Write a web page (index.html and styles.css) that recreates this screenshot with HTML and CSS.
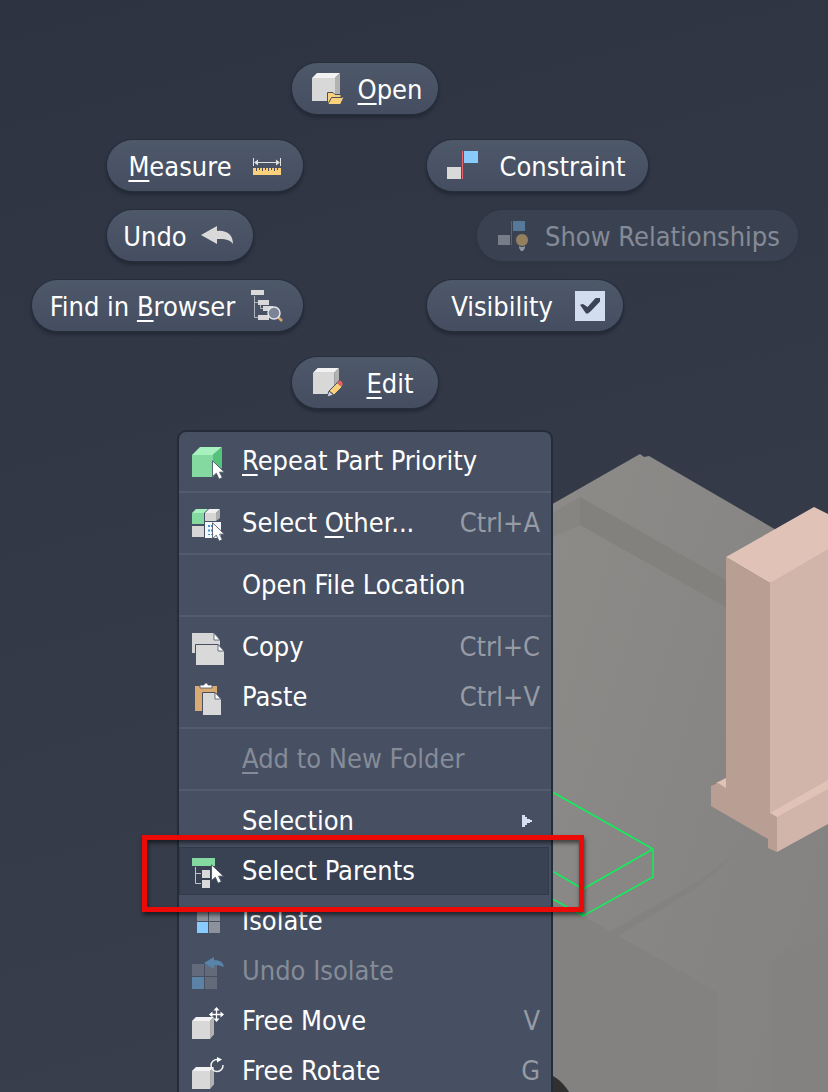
FILE: index.html
```html
<!DOCTYPE html>
<html lang="en">
<head>
<meta charset="utf-8">
<meta name="viewport" content="width=device-width, initial-scale=1">
<title>Marking menu</title>
<link rel="stylesheet" href="styles.css">
</head>
<body>
<svg class="scene" viewBox="0 0 828 1092" preserveAspectRatio="xMinYMin slice" aria-hidden="true">
  <defs>
    <linearGradient id="body" x1="0" y1="0" x2="1" y2="0.6">
      <stop offset="0" stop-color="#8d8c89"/>
      <stop offset="1" stop-color="#848382"/>
    </linearGradient>
  </defs>
  <path fill="url(#body)" d="M500 534 640 454 644 457 649 456 828 560V1092H500z"/>
  <path fill="#868582" d="M540 520 580 497V525L540 543z"/>
  <path fill="#82817e" d="M580 497 740 588V615L580 525z"/>
  <path fill="#838280" d="M540 892 583 916 717 992V1092H540z"/>
  <path fill="#838280" d="M610 932 700 880 740 850 700 886 618 936z"/>
  <path fill="#828180" d="M771 959 828 931V1092H771z" opacity=".35"/>
  <path fill="#e0c2b7" d="M726 557 814 507 828 514V560L770 583z"/>
  <path fill="#d2b5aa" d="M770 583 828 549V790L770 815z"/>
  <path fill="#e0c2b7" d="M716 783 726 778V790zM770 813 828 780V790L777 818z"/>
  <path fill="#b99e93" d="M726 557 770 583V813L777 817V852L768 848V839L711 806V786L718 783 726 788z"/>
  <path fill="#d2b5aa" d="M777 817 828 789V824L777 852z"/>
  <path fill="#303030" d="M540 1072Q558 1074 569 1092H540z"/>
  <path fill="none" stroke="#10f05a" stroke-width="1.5" d="M540 785 653 849V877L583 916 540 892M653 849 583 889V916M583 889 540 864"/>
</svg>

<svg class="symbols" aria-hidden="true">
  <symbol id="cursor" viewBox="0 0 12 18"><path fill="#fff" stroke="#474f62" stroke-width=".8" d="M.5.5V15L4 12 6.500 17.500 9.500 16 7 11H11.500z"/></symbol>
  <symbol id="cube" viewBox="0 0 28 28"><path fill="#d8d8d8" d="M0 5H23V28H0z"/><path fill="#f2f2f2" d="M0 5 5 0H28L23 5z"/><path fill="#b2b2b2" d="M23 5 28 0V22L23 28z"/></symbol>
</svg>

<main class="marking">
  <button class="pill w-s top" type="button">
    <svg class="icon" viewBox="0 0 32 32"><use href="#cube" width="28" height="28"/><path fill="#fbd07a" stroke="#474f62" d="M15.500 31.500V19.500H21L23 21.500H29V24H32L28.500 31.500z"/><path fill="none" stroke="#474f62" d="M16 31 19.500 24.500H30"/></svg>
    <span class="label"><u>O</u>pen</span>
  </button>

  <div class="side left">
    <button class="pill w-m inset" type="button">
      <span class="label"><u>M</u>easure</span>
      <svg class="icon" viewBox="0 0 32 32"><path fill="#fbd07a" d="M2 18H30V25H2z"/><path stroke="#474f62" d="M5.500 18V21M8.500 18V20M11.500 18V21M14.500 18V20M17.500 18V21M20.500 18V20M23.500 18V21M26.500 18V20"/><path stroke="#e0e0e0" d="M2.500 8V16M29.500 8V16M5 12.500H27"/><path fill="#e0e0e0" d="M3 12.500 7 9.500V15.500zM29 12.500 25 9.500V15.500z"/></svg>
    </button>
    <button class="pill w-s inset" type="button">
      <span class="label">Undo</span>
      <svg class="icon" viewBox="0 0 32 32"><path fill="#d9d9d9" d="M0 15 16 6V11C26 10 32 15 32 24 28 19 24 19 16 19V24z"/></svg>
    </button>
    <button class="pill w-l" type="button">
      <span class="label">Find in <u>B</u>rowser</span>
      <svg class="icon" viewBox="0 0 32 32"><path fill="#d9d9d9" d="M0 0H13V5H0zM7 10H18V15H7zM12 16H22V21H12zM7 25H18V30H7z"/><path fill="none" stroke="#aeb3bd" d="M3.500 6V27.500H7M3.500 12.500H7M9.500 15V18.500H12"/><path stroke="#dba46a" stroke-width="2.500" d="M27 27 31 31"/><circle cx="23" cy="23" r="6" fill="#7b8496" stroke="#e4e6ea" stroke-width="1.500"/></svg>
    </button>
  </div>

  <div class="side right">
    <button class="pill w-ml" type="button">
      <svg class="icon" viewBox="0 0 32 32"><path fill="#d9d9d9" d="M0 17H14V29H0z"/><path fill="#8acbfd" d="M17 1H31V13H17z"/><path stroke="#f0616a" d="M15.500 1V29"/></svg>
      <span class="label">Constraint</span>
    </button>
    <button class="pill w-xl shift" type="button" disabled>
      <svg class="icon" viewBox="0 0 32 32"><path fill="#777d88" d="M1 15H13V25H1z"/><path fill="#56799a" d="M16 1H28V11H16z"/><path stroke="#84525f" d="M14.500 1V25"/><path fill="#9094a0" d="M22 25H28V28L26 31H24L22 28z"/><circle cx="25" cy="20" r="6.500" fill="#92805f" stroke="#3a4252"/></svg>
      <span class="label">Show Relationships</span>
    </button>
    <label class="pill w-m" for="visibility">
      <span class="label">Visibility</span>
      <input class="check" type="checkbox" id="visibility" checked>
    </label>
  </div>

  <button class="pill w-s bottom" type="button">
    <svg class="icon" viewBox="0 0 32 32"><use href="#cube" x="1" y="1" width="26" height="26"/><path fill="#fbd07a" stroke="#474f62" d="M17 24 26 15 31 19 22 28z"/><path fill="#d5d8dd" stroke="#474f62" d="M17 24 21.500 28 15 30z"/><path fill="#f0605f" stroke="#474f62" stroke-width=".6" d="M25 15.500 27 13.500Q31 13 31 18L29.500 19.500z"/></svg>
    <span class="label"><u>E</u>dit</span>
  </button>

  <menu class="menu">
    <li><button class="item" type="button">
      <svg class="icon" viewBox="0 0 32 32"><path fill="#83d99f" d="M0 8H21V30H0z"/><path fill="#a6f1bd" d="M0 8 8 0H30L21 8z"/><path fill="#54c47c" d="M21 8 30 0V21L21 30z"/><use href="#cursor" x="20" y="13" width="13" height="20"/></svg>
      <span><u>R</u>epeat Part Priority</span>
    </button></li>
    <li class="rule"></li>
    <li><button class="item" type="button">
      <svg class="icon" viewBox="0 0 32 32"><path fill="#83d99f" d="M0 4H12V15H0z"/><path fill="#a6f1bd" d="M0 4 4 0H16L12 4z"/><path fill="#d6d6d6" d="M13 4H24V12H13zM0 17H12V28H0z"/><path fill="#f1f1f1" d="M13 4 17 0H28L24 4z"/><path fill="#adadad" d="M24 4 28 0V9L24 12z"/><path fill="#f4f7fb" d="M13 13H29V29H13z"/><path fill="none" stroke="#3498e8" stroke-width="2" stroke-dasharray="2 2.500" d="M17 16V26M20 16V26"/><use href="#cursor" x="20" y="13" width="13" height="20"/></svg>
      <span>Select <u>O</u>ther...</span><kbd>Ctrl+A</kbd>
    </button></li>
    <li class="rule"></li>
    <li><button class="item" type="button">
      <span class="icon"></span><span>Open File Location</span>
    </button></li>
    <li class="rule"></li>
    <li><button class="item" type="button">
      <svg class="icon" viewBox="0 0 32 32"><path fill="#d6d6d6" d="M0 0H22L28 7V20H0z"/><path fill="#fff" stroke="#474f62" stroke-width=".8" d="M22 0V7H28z"/><path fill="#d9d9d9" stroke="#474f62" d="M3.500 11.500H26L32.500 18V32.500H3.500z"/><path fill="#fff" stroke="#474f62" stroke-width=".8" d="M26 11.500V18H32z"/></svg>
      <span>Copy</span><kbd>Ctrl+C</kbd>
    </button></li>
    <li><button class="item" type="button">
      <svg class="icon" viewBox="0 0 32 32"><path fill="#d9ab73" d="M3 3H25V28H3z"/><path fill="#fff" stroke="#474f62" stroke-width=".8" d="M8 5V2H12Q12 0 14 0T16 2H20V5z"/><path fill="#d9d9d9" stroke="#474f62" d="M10.500 9.500H23L29.500 16V32.500H10.500z"/><path fill="#fff" stroke="#474f62" stroke-width=".8" d="M23 9.500V16H29z"/></svg>
      <span>Paste</span><kbd>Ctrl+V</kbd>
    </button></li>
    <li class="rule"></li>
    <li><button class="item" type="button" disabled>
      <span class="icon"></span><span><u>A</u>dd to New Folder</span>
    </button></li>
    <li class="rule"></li>
    <li><button class="item" type="button" aria-haspopup="menu">
      <span class="icon"></span><span>Selection</span>
      <svg class="arrow" viewBox="0 0 10 16"><path fill="#d5e0f0" d="M0 2H3V4H5V6H8V7H10V9H8V10H5V12H3V14H0z"/></svg>
    </button></li>
    <li class="callout"><button class="item active" type="button">
      <svg class="icon" viewBox="0 0 32 32"><path fill="#83d99f" d="M0 1H23V9H0z"/><path fill="none" stroke="#bfc4cc" d="M3.500 10V26.500H9M3.500 16.500H9"/><path fill="#d9d9d9" d="M10 13H18V21H10zM10 23H18V31H10z"/><use href="#cursor" x="19" y="7" width="13" height="20"/></svg>
      <span>Select Parents</span>
    </button></li>
    <li><button class="item" type="button">
      <svg class="icon" viewBox="0 0 32 32"><path fill="#8d919b" d="M5 3H16V14H5zM17 3H28V14H17zM17 15H28V26H17z"/><path fill="#8acbfd" d="M5 15H16V26H5z"/></svg>
      <span>Isolate</span>
    </button></li>
    <li><button class="item" type="button" disabled>
      <svg class="icon" viewBox="0 0 32 32"><path fill="#636a79" d="M0 7H12V19H0zM13 7H25V19H13zM13 20H25V32H13z"/><path fill="#5c82a5" d="M0 20H12V32H0z"/><path fill="#5984aa" d="M12 6 22 0V3Q31 3 32 10 28 8 22 8V12z"/></svg>
      <span>Undo Isolate</span>
    </button></li>
    <li><button class="item" type="button">
      <svg class="icon" viewBox="0 0 32 32"><use href="#cube" y="10" width="22" height="22"/><path fill="none" stroke="#fff" stroke-width="1.300" d="M24.500 1V14M18 7.500H31"/><path fill="#fff" d="M24.500 0 27.500 3.500H21.500zM24.500 15 27.500 11.500H21.500zM17 7.500 20.500 4.500V10.500zM32 7.500 28.500 4.500V10.500z"/></svg>
      <span>Free Move</span><kbd>V</kbd>
    </button></li>
    <li><button class="item" type="button">
      <svg class="icon" viewBox="0 0 32 32"><use href="#cube" y="10" width="22" height="22"/><path fill="none" stroke="#f2f2f2" stroke-width="1.500" d="M25.500 2.500A6 6 0 1 0 31 8"/><path fill="#fff" d="M25 0 30 2.500 25 5.500z"/></svg>
      <span>Free Rotate</span><kbd>G</kbd>
    </button></li>
  </menu>
</main>
</body>
</html>
```
FILE: styles.css
```css
* {
  box-sizing: border-box;
}

body {
  margin: 0;
  position: relative;
  height: 100vh;
  overflow: hidden;
  background: linear-gradient(165deg, #2d3341, #333947 45%, #393f4c);
  color: #fff;
  font: 27px/32px "DejaVu Sans Condensed", "Noto Sans", sans-serif;
}

.scene {
  position: absolute;
  inset: 0;
  width: 100%;
  height: 100%;
}

.symbols {
  position: absolute;
  width: 0;
  height: 0;
}

.marking {
  position: relative;
  display: grid;
  grid-template-columns: 271px 124px 1fr;
  padding: 63px 0 0 32px;
}

.top,
.bottom,
.menu {
  grid-column: 2;
  justify-self: center;
}

.side {
  display: flex;
  flex-direction: column;
  align-items: flex-start;
  gap: 19px;
  padding: 26px 0;
}

.left {
  grid-column: 1;
}

.right {
  grid-column: 3;
}

.inset {
  margin-left: 75px;
}

.shift {
  margin-left: 50px;
}

u {
  text-decoration: underline 2px;
  text-underline-offset: 4px;
  text-decoration-skip-ink: none;
}

.pill {
  display: flex;
  align-items: center;
  height: 51px;
  padding: 0 2px;
  border: 0;
  border-radius: 26px;
  background: linear-gradient(#4d5869, #454e61);
  box-shadow: 0 0 0 1px #272e3b, 0 3px 3px 1px #242a36;
  color: inherit;
  font: inherit;
  white-space: nowrap;
}

.pill:disabled {
  background: #3a4252;
  box-shadow: 0 0 0 1px #303744, 0 2px 2px 1px #2f3643;
  color: #858b96;
}

.w-s { width: 146px; }
.w-m { width: 196px; }
.w-ml { width: 221px; }
.w-l { width: 271px; }
.w-xl { width: 321px; }

.label {
  flex: 1;
  padding-top: 2px;
  text-align: center;
}

.icon {
  flex: none;
  width: 32px;
  height: 32px;
  overflow: visible;
}

.pill .icon:first-child {
  margin-left: 18px;
}

.pill .icon:last-child {
  margin-right: 18px;
}

.check {
  appearance: none;
  display: grid;
  place-items: center;
  width: 30px;
  height: 30px;
  margin: 0 16px 0 0;
  background: #d2def0;
}

.check:checked::before {
  content: "";
  width: 20px;
  height: 16px;
  background: #3b4454;
  clip-path: polygon(0 45%, 15% 40%, 38% 60%, 80% 0, 100% 0, 100% 25%, 55% 85%, 40% 100%, 30% 100%);
}

.menu {
  width: 376px;
  margin: 22px 0 0;
  padding: 4px 0 12px;
  list-style: none;
  border: 2px solid #252c39;
  border-radius: 9px;
  background: #474f62;
}

.item {
  display: flex;
  align-items: center;
  gap: 18px;
  width: 100%;
  height: 50px;
  padding: 0 11px 0 13px;
  border: 0;
  background: none;
  color: inherit;
  font: inherit;
  white-space: nowrap;
}

.item .icon {
  margin-top: 4px;
}

.item:disabled {
  color: #858c98;
}

.item kbd {
  margin-left: auto;
  color: #969ba5;
  font: inherit;
}

.arrow {
  width: 10px;
  height: 16px;
  margin: 0 8px 0 auto;
}

.rule {
  height: 2px;
  margin: 5px 0;
  background: #535c6f;
}

.callout {
  position: relative;
}

.callout::after {
  content: "";
  position: absolute;
  z-index: 1;
  inset: -11px -33px -16px -37px;
  border: 5px solid #ec0a06;
  box-shadow: 1px 3px 4px #0008, inset 1px 3px 4px #0008;
  pointer-events: none;
}

.active {
  border: solid transparent;
  border-width: 1px 2px 1px 0;
  background: #394253 padding-box;
  box-shadow: inset 0 0 0 1px #323a49;
}
```
